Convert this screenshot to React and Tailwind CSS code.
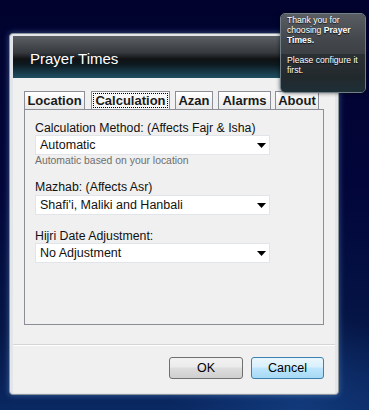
import React from 'react';

const TABS = [
  { label: 'Location', w: 'w-[61px]', ml: 'ml-0' },
  { label: 'Calculation', w: 'w-[79px]', ml: 'ml-[6px]', active: true },
  { label: 'Azan', w: 'w-[38px]', ml: 'ml-[5px]' },
  { label: 'Alarms', w: 'w-[53px]', ml: 'ml-[5px]' },
  { label: 'About', w: 'w-[44px]', ml: 'ml-[4px]' },
];

function Combo({ value, className = '' }) {
  return (
    <div className={`flex items-center justify-between w-[235px] h-[20px] bg-white border border-[#e1e4e8] pl-[4px] pr-[3px] ${className}`}>
      <span className="text-[12.5px] leading-none text-[#111]">{value}</span>
      <svg width="9" height="5" viewBox="0 0 9 5"><path d="M0 0h9L4.5 5z" fill="#000" /></svg>
    </div>
  );
}

export default function App() {
  return (
    <div className="relative w-[369px] h-[410px] overflow-hidden font-['Liberation_Sans',Arial,sans-serif] bg-[linear-gradient(180deg,#01032e_0%,#020539_45%,#051646_80%,#0a2862_100%)]">
      {/* aurora glow bottom right */}
      <div className="absolute right-[-60px] bottom-[-90px] w-[260px] h-[190px] rounded-full bg-[radial-gradient(closest-side,#1d55a0,transparent)] opacity-40" />

      <div className="relative pt-[33px] pl-[9px]">
        {/* window */}
        <div className="w-[330px] h-[362px] rounded-[4px] border border-[#8d949a] bg-[#e3e6e9] px-[3px] pt-[2px] pb-[1px] shadow-[0_0_6px_rgba(120,170,230,0.45)]">
          {/* title bar */}
          <div className="h-[42px] flex items-center pl-[17px] bg-[linear-gradient(180deg,#5c6065_0%,#36393d_40%,#101214_55%,#0d1a20_68%,#173846_85%,#1f4f62_100%)]">
            <span className="text-white text-[15px] leading-none mt-[2px]">Prayer Times</span>
          </div>

          {/* client area */}
          <div className="h-[315px] bg-[#f0f0f0] flex flex-col">
            <div className="pl-[11px] pt-[13px]">
              {/* tabs */}
              <div className="flex items-end h-[18px]">
                {TABS.map(t => (
                  <div key={t.label}
                    className={`${t.w} ${t.ml} h-[18px] flex items-center justify-center border border-b-0 border-[#8b8e96] ${t.active ? 'bg-[#f7f7f7]' : 'bg-[linear-gradient(180deg,#ffffff,#e8e8e8)]'}`}>
                    {t.active ? (
                      <span className="border border-dotted border-black px-[1px] h-[15px] flex items-center text-[13px] font-bold text-[#1a1a1a] leading-none">{t.label}</span>
                    ) : (
                      <span className="text-[13px] font-bold text-[#1a1a1a] leading-none">{t.label}</span>
                    )}
                  </div>
                ))}
              </div>

              {/* tab panel */}
              <div className="w-[300px] h-[216px] border border-[#8b8e96] pl-[10px] pt-[12px] text-[#111]">
                <div className="h-[13px] text-[12.3px] leading-[13px]">Calculation Method: (Affects Fajr &amp; Isha)</div>
                <Combo value="Automatic" />
                <div className="h-[12px] text-[10.4px] leading-[12px] text-[#6e6e6e]">Automatic based on your location</div>

                <div className="mt-[14px] h-[13px] text-[12.3px] leading-[13px]">Mazhab: (Affects Asr)</div>
                <Combo value="Shafi'i, Maliki and Hanbali" className="mt-[1px]" />

                <div className="mt-[15px] h-[13px] text-[12.3px] leading-[13px]">Hijri Date Adjustment:</div>
                <Combo value="No Adjustment" />
              </div>
            </div>

            {/* separator */}
            <div className="mt-[19px] h-px bg-[#d5d5d5]" />
            <div className="h-px bg-white" />

            {/* buttons */}
            <div className="flex justify-end gap-[8px] pr-[11px] pt-[11px]">
              <button className="w-[74px] h-[22px] rounded-[3px] border border-[#707070] bg-[linear-gradient(180deg,#f2f2f2_0%,#ebebeb_45%,#dddddd_50%,#cfcfcf_100%)] text-[12.5px] text-black leading-none">OK</button>
              <button className="w-[73px] h-[22px] rounded-[3px] border border-[#3c7fb1] bg-[linear-gradient(180deg,#eaf6fd_0%,#d9f0fc_45%,#bee6fd_50%,#a7d9f5_100%)] text-[12.5px] text-black leading-none">Cancel</button>
            </div>
          </div>
        </div>
      </div>

      {/* balloon tooltip */}
      <div className="absolute left-[280px] top-[13px] w-[86px] h-[80px] rounded-[5px] border border-[#6f808b] overflow-hidden shadow-[0_0_4px_rgba(0,0,0,0.6)] text-white text-[8.6px] leading-[10px] [text-shadow:0_1px_1px_rgba(0,0,0,0.8)]">
        <div className="h-[40px] pl-[6px] pt-[1px] bg-[linear-gradient(180deg,#5a5e63_0%,#45494d_60%,#3d4145_100%)]">
          <div>Thank you for</div>
          <div>choosing <b>Prayer</b></div>
          <div><b>Times.</b></div>
        </div>
        <div className="h-[40px] pl-[6px] pt-[1px] bg-[linear-gradient(180deg,#2b3034_0%,#22292d_60%,#1d3038_100%)]">
          <div>Please configure it</div>
          <div>first.</div>
        </div>
      </div>
    </div>
  );
}
